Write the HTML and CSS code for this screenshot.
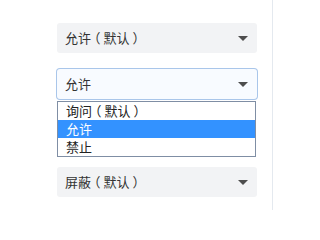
FILE: index.html
```html
<!DOCTYPE html>
<html lang="zh">
<head>
<meta charset="utf-8">
<link rel="stylesheet" href="styles.css">
</head>
<body>
<div class="page">
  <div class="panel">
    <div class="select">
      <span class="value">允许<span class="paren">（</span>默认<span class="paren">）</span></span>
      <span class="caret"></span>
    </div>
    <div class="select focused">
      <span class="value">允许</span>
      <span class="caret"></span>
    </div>
    <ul class="listbox">
      <li class="option">询问<span class="paren">（</span>默认<span class="paren">）</span></li>
      <li class="option selected">允许</li>
      <li class="option">禁止</li>
    </ul>
    <div class="select last">
      <span class="value">屏蔽<span class="paren">（</span>默认<span class="paren">）</span></span>
      <span class="caret"></span>
    </div>
  </div>
  <div class="divider"></div>
</div>
</body>
</html>
```
FILE: styles.css
```css
html, body {
  margin: 0;
  padding: 0;
  background: #ffffff;
}
body {
  font-family: "Noto Sans CJK SC", "Noto Sans", sans-serif;
  font-size: 13px;
  color: #333333;
}
.page {
  display: flex;
  width: 274px;
  height: 210px;
}
.panel {
  width: 200px;
  padding: 23px 15px 0 57px;
  display: flex;
  flex-direction: column;
}
.select {
  box-sizing: border-box;
  height: 30px;
  display: flex;
  align-items: center;
  justify-content: space-between;
  padding: 0 9px 0 8px;
  background: #f2f3f5;
  border-radius: 3px;
}
.select.focused {
  margin-top: 16px;
  background: #f8fbff;
  box-shadow: 0 0 0 1px #a9c6ea;
}
.select.last {
  margin-top: 10px;
}
.value {
  line-height: 16px;
}
.paren {
  font-feature-settings: "halt";
  margin: 0 3px;
}
.caret {
  width: 0;
  height: 0;
  border-left: 5px solid transparent;
  border-right: 5px solid transparent;
  border-top: 5px solid #4d4d4d;
  margin-top: 1px;
}
.listbox {
  list-style: none;
  margin: 2px 1px 0 0;
  padding: 0;
  border: 1px solid #7f8ea4;
  background: #ffffff;
}
.option {
  height: 18px;
  line-height: 18px;
  padding-left: 8px;
  color: #222222;
}
.option.selected {
  background: #3392ff;
  color: #ffffff;
}
.divider {
  width: 1px;
  height: 210px;
  background: #e4e9ef;
}
```
